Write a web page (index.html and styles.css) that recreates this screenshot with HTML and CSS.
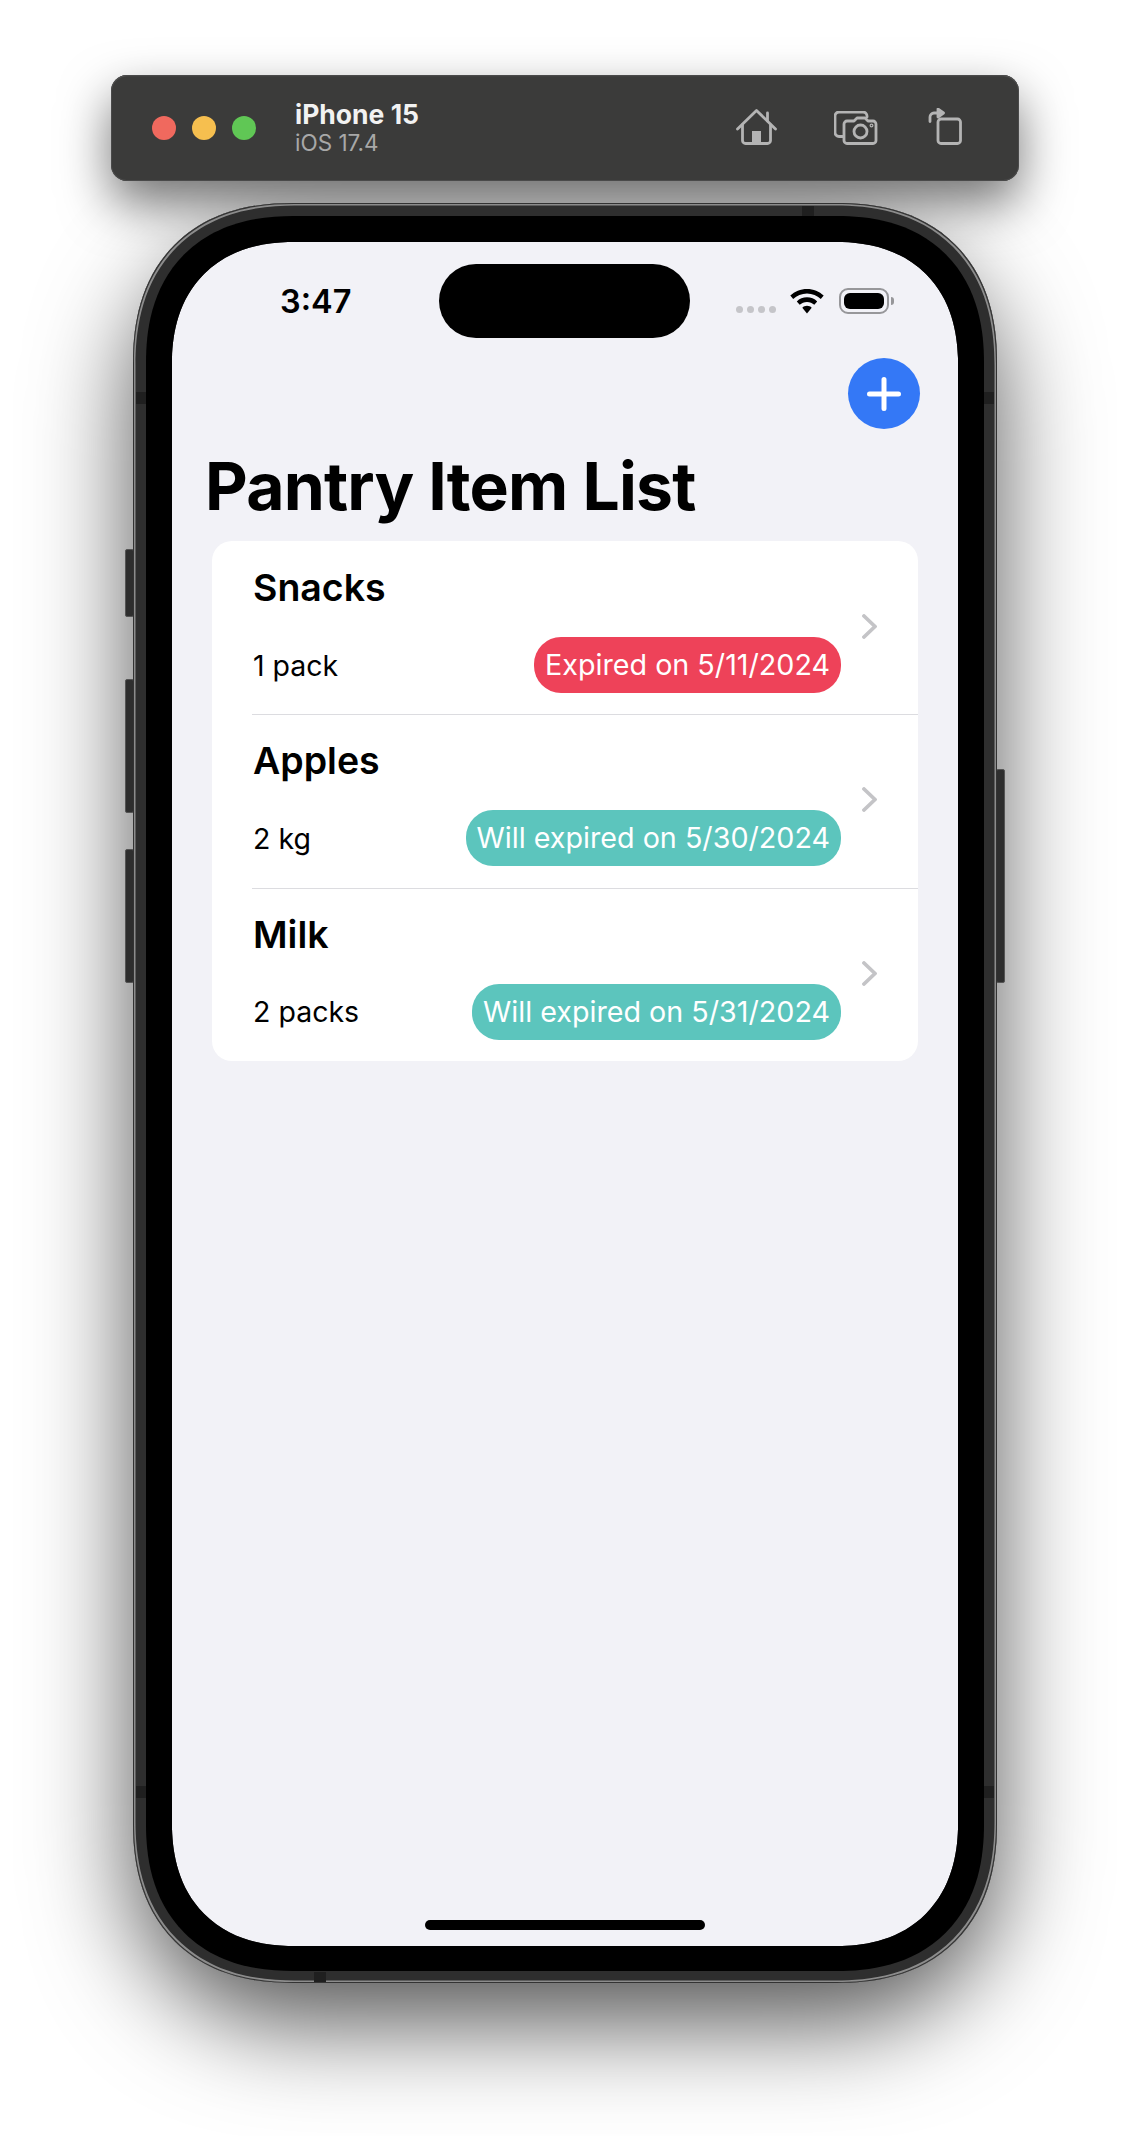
FILE: index.html
```html
<!doctype html>
<html lang="en">
	<head>
		<meta charset="UTF-8">
		<meta name="viewport" content="width=device-width, initial-scale=1.0">
		<title>Pantry Item List</title>
		<link rel="stylesheet" href="styles.css">
	</head>
	<body>

		<div class="titlebar">
			<div class="lights">
				<span class="light red"></span>
				<span class="light yellow"></span>
				<span class="light green"></span>
			</div>
			<div class="device">
				<div class="device-name">iPhone 15</div>
				<div class="device-os">iOS 17.4</div>
			</div>
			<div class="tools">
				<svg class="tool-home" width="41" height="36" viewBox="0 0 41 36" fill="none" stroke="#b4b4b4" stroke-width="2.8" stroke-linecap="round" stroke-linejoin="round">
					<path d="M1.5 20 20.5 1.5 39.5 20"/>
					<path d="M31.5 12V4"/>
					<path d="M6.5 16V31.5a3 3 0 0 0 3 3H31.5a3 3 0 0 0 3-3V16"/>
					<rect x="16" y="22" width="9" height="13" fill="#b4b4b4" stroke="none"/>
				</svg>
				<svg class="tool-camera" width="44" height="34" viewBox="0 0 44 34" fill="none" stroke="#b4b4b4" stroke-width="2.8" stroke-linecap="round" stroke-linejoin="round">
					<path d="M9 25.5H5a4 4 0 0 1-4-4V5a4 4 0 0 1 4-4H29a4 4 0 0 1 4 4V6"/>
					<path d="M13 10h7l3-3h8l3 3h5a3 3 0 0 1 3 3V29.5a3 3 0 0 1-3 3H13a3 3 0 0 1-3-3V13a3 3 0 0 1 3-3Z"/>
					<circle cx="26.5" cy="20.5" r="6.5"/>
					<circle cx="37.5" cy="14.5" r="0.6"/>
				</svg>
				<svg class="tool-rotate" width="34" height="37" viewBox="0 0 34 37" fill="none" stroke="#b4b4b4" stroke-width="2.8" stroke-linecap="round" stroke-linejoin="round">
					<rect x="10" y="11" width="22.5" height="24.5" rx="3"/>
					<path d="M2 13.5V9a4 4 0 0 1 4-4h4"/>
					<path d="M10 1 15.5 5 10 9Z" fill="#b4b4b4"/>
				</svg>
			</div>
		</div>

		<div class="phone">
			<span class="side-btn mute"></span>
			<span class="side-btn vol-up"></span>
			<span class="side-btn vol-down"></span>
			<span class="side-btn power"></span>

			<span class="band band-left-top"></span>
			<span class="band band-right-top"></span>
			<span class="band band-left-bottom"></span>
			<span class="band band-right-bottom"></span>
			<span class="band-h band-top"></span>
			<span class="band-h band-bottom"></span>

			<div class="bezel">
				<div class="screen">

					<div class="status">
						<div class="status-left">3:47</div>
						<div class="island"></div>
						<div class="status-right">
							<div class="signal">
								<span></span><span></span><span></span><span></span>
							</div>
							<svg class="wifi" width="34" height="25" viewBox="0 0 34 25" fill="#000">
								<path d="M17 0C10.500 0 4.700 2.500 0.300 6.600L3.200 10C6.800 6.600 11.700 4.500 17 4.500S27.200 6.600 30.800 10L33.700 6.600C29.300 2.500 23.500 0 17 0Z"/>
								<path d="M17 8.300C13.100 8.300 9.500 9.800 6.800 12.400L9.700 15.800C11.600 14 14.200 12.900 17 12.900S22.400 14 24.300 15.800L27.200 12.400C24.500 9.800 20.900 8.300 17 8.300Z"/>
								<path d="M17 16.800C15.200 16.800 13.600 17.500 12.300 18.700L17 24.500 21.700 18.700C20.400 17.500 18.800 16.800 17 16.800Z"/>
							</svg>
							<div class="battery">
								<div class="battery-fill"></div>
							</div>
							<span class="battery-nub"></span>
						</div>
					</div>

					<div class="toolbar">
						<button type="button" class="add-btn">
							<svg width="34" height="34" viewBox="0 0 34 34" stroke="#fff" stroke-width="5" stroke-linecap="round">
								<path d="M17 2.500V31.500M2.500 17H31.500"/>
							</svg>
						</button>
					</div>

					<h1 class="page-title">Pantry Item List</h1>

					<div class="card">
						<div class="row">
							<div class="row-body">
								<div class="item-name">Snacks</div>
								<div class="item-meta">
									<span class="item-qty">1 pack</span>
									<span class="badge expired">Expired on 5/11/2024</span>
								</div>
							</div>
							<svg class="chevron" width="15" height="25" viewBox="0 0 15 25" fill="none" stroke="#c4c4c7" stroke-width="3.800" stroke-linecap="round" stroke-linejoin="round">
								<path d="M2 2 13 12.500 2 23"/>
							</svg>
						</div>
						<div class="row">
							<div class="row-body">
								<div class="item-name">Apples</div>
								<div class="item-meta">
									<span class="item-qty">2 kg</span>
									<span class="badge fresh">Will expired on 5/30/2024</span>
								</div>
							</div>
							<svg class="chevron" width="15" height="25" viewBox="0 0 15 25" fill="none" stroke="#c4c4c7" stroke-width="3.800" stroke-linecap="round" stroke-linejoin="round">
								<path d="M2 2 13 12.500 2 23"/>
							</svg>
						</div>
						<div class="row">
							<div class="row-body">
								<div class="item-name">Milk</div>
								<div class="item-meta">
									<span class="item-qty">2 packs</span>
									<span class="badge fresh">Will expired on 5/31/2024</span>
								</div>
							</div>
							<svg class="chevron" width="15" height="25" viewBox="0 0 15 25" fill="none" stroke="#c4c4c7" stroke-width="3.800" stroke-linecap="round" stroke-linejoin="round">
								<path d="M2 2 13 12.500 2 23"/>
							</svg>
						</div>
					</div>

					<div class="home-bar"></div>
				</div>
			</div>
		</div>

	</body>
</html>
```

FILE: styles.css
```css
* {
	box-sizing: border-box;
}

body {
	margin: 0;
	height: 2136px;
	padding-top: 75px;
	background-color: #fff;
	font-family: Inter, "Liberation Sans", sans-serif;
	overflow: hidden;
}

/* simulator title bar */
.titlebar {
	position: relative;
	display: flex;
	align-items: center;
	height: 106px;
	margin: 0 111px;
	padding-left: 41px;
	background-color: #3b3b3a;
	border-radius: 16px;
	box-shadow: inset 0 0 0 1px #4a4a4a, inset 0 1px 1px #6a6a6a, 0 22px 50px rgba(0, 0, 0, 0.55);
}

.lights {
	display: flex;
	gap: 16px;
}

.light {
	width: 24px;
	height: 24px;
	border-radius: 50%;
}

.red { background-color: #f0695e; }
.yellow { background-color: #f6bf4f; }
.green { background-color: #60c755; }

.device {
	margin-left: 39px;
	margin-top: -2px;
}

.device-name {
	color: #f2f2f2;
	font-size: 26.5px;
	font-weight: 700;
	line-height: 30px;
}

.device-os {
	color: #a8a8a8;
	font-size: 22.5px;
	line-height: 27px;
}

.tools {
	display: flex;
	align-items: flex-end;
	margin-left: auto;
	margin-right: 57px;
	padding-bottom: 4px;
}

.tool-camera {
	margin-left: 57px;
}

.tool-rotate {
	margin-left: 50px;
}

/* phone body */
.phone {
	position: relative;
	height: 1780px;
	margin: 22px 133px 0;
	padding: 3px;
	background-color: #2e2e2e;
	border-radius: 160px;
	corner-shape: superellipse(1.2);
	box-shadow: inset 0 0 0 1px #333, inset 0 0 0 2.500px #8c8c8c;
}

/* the big soft shadow has to stay behind the title bar */
.phone::before {
	content: "";
	position: absolute;
	inset: 0;
	border-radius: 160px;
	box-shadow: 0 40px 100px rgba(0, 0, 0, 0.67);
	z-index: -2;
}

.bezel {
	height: 100%;
	padding: 10px 10px 9px;
	border-radius: 157px;
}

.side-btn {
	position: absolute;
	width: 9px;
	background-color: #2e2e2e;
	border: 1px solid #555;
	border-radius: 2px;
	z-index: -1;
}

.mute { left: -8px; top: 346px; height: 68px; }
.vol-up { left: -8px; top: 476px; height: 134px; }
.vol-down { left: -8px; top: 646px; height: 134px; }
.power { right: -8px; top: 566px; height: 214px; }

.band,
.band-h {
	position: absolute;
	background-color: #1f1f1f;
}

.band { width: 10px; height: 12px; }
.band-h { width: 12px; height: 10px; }

.band-left-top { left: 3px; top: 189px; }
.band-right-top { right: 3px; top: 189px; }
.band-left-bottom { left: 3px; top: 1583px; }
.band-right-bottom { right: 3px; top: 1583px; }
.band-top { top: 3px; left: 669px; }
.band-bottom { bottom: 1px; left: 181px; }

.screen {
	position: relative;
	height: 100%;
	background-color: #f2f2f7;
	border: 26px solid #000;
	border-bottom-width: 25px;
	border-radius: 147px;
	corner-shape: superellipse(1.2);
	background-clip: padding-box;
	overflow: hidden;
}

/* status bar */
.status {
	display: flex;
	align-items: center;
	padding-top: 22px;
}

.status-left {
	width: 267px;
	padding-left: 108px;
	font-size: 32.5px;
	font-weight: 600;
	color: #000;
}

.island {
	width: 251px;
	height: 74px;
	background-color: #000;
	border-radius: 37px;
}

.status-right {
	display: flex;
	align-items: flex-end;
	height: 26px;
	margin-left: 46px;
}

.signal {
	display: flex;
	gap: 4px;
	margin-bottom: 1px;
	margin-right: 14px;
}

.signal span {
	width: 7px;
	height: 7px;
	background-color: #c5c5c9;
	border-radius: 50%;
}

.battery {
	width: 50px;
	height: 26px;
	margin-left: 15px;
	padding: 3px;
	border: 2px solid #97979a;
	border-radius: 9px;
}

.battery-fill {
	height: 100%;
	background-color: #000;
	border-radius: 6px;
}

.battery-nub {
	width: 3px;
	height: 8px;
	margin-left: 2px;
	margin-bottom: 9px;
	background-color: #97979a;
	border-radius: 0 3px 3px 0;
}

/* nav */
.toolbar {
	display: flex;
	justify-content: flex-end;
	padding: 20px 38px 0 0;
}

.add-btn {
	display: flex;
	align-items: center;
	justify-content: center;
	width: 72px;
	height: 71px;
	padding: 0;
	background-color: #3478f6;
	border: none;
	border-radius: 50%;
}

.page-title {
	margin: 17px 0 0 33px;
	font-size: 66px;
	font-weight: 700;
	line-height: 80px;
	letter-spacing: -0.8px;
	color: #000;
}

/* list */
.card {
	margin: 15px 40px 0;
	background-color: #fff;
	border-radius: 20px;
	overflow: hidden;
}

.row {
	display: flex;
	align-items: center;
	height: 173.33px;
	margin-left: 40px;
	padding: 3px 41px 0 1px;
}

.row + .row {
	box-shadow: inset 0 1px 0 #dcdce0;
}

.row-body {
	flex: 1;
	margin-right: 21px;
}

.chevron {
	margin-top: -5px;
}

.item-name {
	font-size: 37.5px;
	font-weight: 600;
	line-height: 46px;
	color: #000;
}

.item-meta {
	display: flex;
	align-items: center;
	justify-content: space-between;
	margin-top: 26px;
}

.item-qty {
	font-size: 28.5px;
	color: #000;
}

.badge {
	height: 56px;
	padding: 0 11px;
	font-size: 28.7px;
	line-height: 56px;
	color: #fff;
	border-radius: 27px;
}

.expired { background-color: #ee4259; }
.fresh { background-color: #5cc5bd; }

.home-bar {
	position: absolute;
	left: 253px;
	bottom: 16px;
	width: 280px;
	height: 10px;
	background-color: #000;
	border-radius: 5px;
}
```
